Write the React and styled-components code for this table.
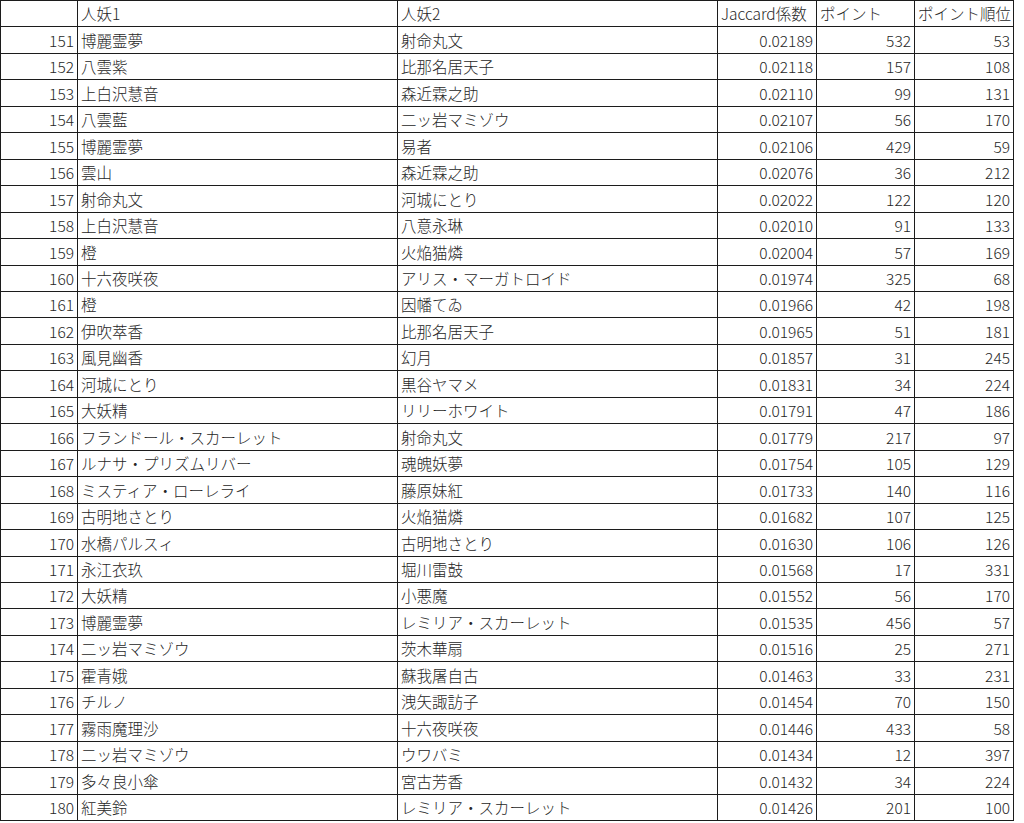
import React from "react";
import styled, { createGlobalStyle } from "styled-components";

const GlobalStyle = createGlobalStyle`
  html, body { margin: 0; padding: 0; background: #ffffff; }
  body { font-family: "Noto Sans CJK JP", "Noto Sans", sans-serif; }
`;

const rows = [
  [151, "博麗霊夢", "射命丸文", "0.02189", 532, 53],
  [152, "八雲紫", "比那名居天子", "0.02118", 157, 108],
  [153, "上白沢慧音", "森近霖之助", "0.02110", 99, 131],
  [154, "八雲藍", "二ッ岩マミゾウ", "0.02107", 56, 170],
  [155, "博麗霊夢", "易者", "0.02106", 429, 59],
  [156, "雲山", "森近霖之助", "0.02076", 36, 212],
  [157, "射命丸文", "河城にとり", "0.02022", 122, 120],
  [158, "上白沢慧音", "八意永琳", "0.02010", 91, 133],
  [159, "橙", "火焔猫燐", "0.02004", 57, 169],
  [160, "十六夜咲夜", "アリス・マーガトロイド", "0.01974", 325, 68],
  [161, "橙", "因幡てゐ", "0.01966", 42, 198],
  [162, "伊吹萃香", "比那名居天子", "0.01965", 51, 181],
  [163, "風見幽香", "幻月", "0.01857", 31, 245],
  [164, "河城にとり", "黒谷ヤマメ", "0.01831", 34, 224],
  [165, "大妖精", "リリーホワイト", "0.01791", 47, 186],
  [166, "フランドール・スカーレット", "射命丸文", "0.01779", 217, 97],
  [167, "ルナサ・プリズムリバー", "魂魄妖夢", "0.01754", 105, 129],
  [168, "ミスティア・ローレライ", "藤原妹紅", "0.01733", 140, 116],
  [169, "古明地さとり", "火焔猫燐", "0.01682", 107, 125],
  [170, "水橋パルスィ", "古明地さとり", "0.01630", 106, 126],
  [171, "永江衣玖", "堀川雷鼓", "0.01568", 17, 331],
  [172, "大妖精", "小悪魔", "0.01552", 56, 170],
  [173, "博麗霊夢", "レミリア・スカーレット", "0.01535", 456, 57],
  [174, "二ッ岩マミゾウ", "茨木華扇", "0.01516", 25, 271],
  [175, "霍青娥", "蘇我屠自古", "0.01463", 33, 231],
  [176, "チルノ", "洩矢諏訪子", "0.01454", 70, 150],
  [177, "霧雨魔理沙", "十六夜咲夜", "0.01446", 433, 58],
  [178, "二ッ岩マミゾウ", "ウワバミ", "0.01434", 12, 397],
  [179, "多々良小傘", "宮古芳香", "0.01432", 34, 224],
  [180, "紅美鈴", "レミリア・スカーレット", "0.01426", 201, 100],
];

const Sheet = styled.div`
  display: grid;
  grid-template-columns: 77px 320px 320px 99px 98px 99px;
  grid-template-rows: repeat(31, 26.46px);
  width: max-content;
  border-left: 1px solid #1c1c1c;
  border-top: 1px solid #1c1c1c;
  box-sizing: border-box;
`;

const Cell = styled.div`
  box-sizing: border-box;
  border-right: 1px solid #1c1c1c;
  border-bottom: 1px solid #1c1c1c;
  display: flex;
  align-items: center;
  justify-content: ${(p) => (p.$right ? "flex-end" : "flex-start")};
  padding: 1px ${(p) => (p.$right ? "3px" : "0")} 0 ${(p) => (p.$right ? "0" : "3px")};
  font-family: "Noto Sans CJK JP", "Noto Sans", sans-serif;
  font-size: 15.5px;
  font-weight: 300;
  line-height: 1;
  color: #262626;
  white-space: nowrap;
  overflow: hidden;
`;

const headers = ["", "人妖1", "人妖2", "Jaccard係数", "ポイント", "ポイント順位"];

export default function App() {
  return (
    <>
      <GlobalStyle />
      <Sheet>
        {headers.map((h, i) => (
          <Cell key={"h" + i}>{h}</Cell>
        ))}
        {rows.map((r) => (
          <React.Fragment key={r[0]}>
            <Cell $right>{r[0]}</Cell>
            <Cell>{r[1]}</Cell>
            <Cell>{r[2]}</Cell>
            <Cell $right>{r[3]}</Cell>
            <Cell $right>{r[4]}</Cell>
            <Cell $right>{r[5]}</Cell>
          </React.Fragment>
        ))}
      </Sheet>
    </>
  );
}
